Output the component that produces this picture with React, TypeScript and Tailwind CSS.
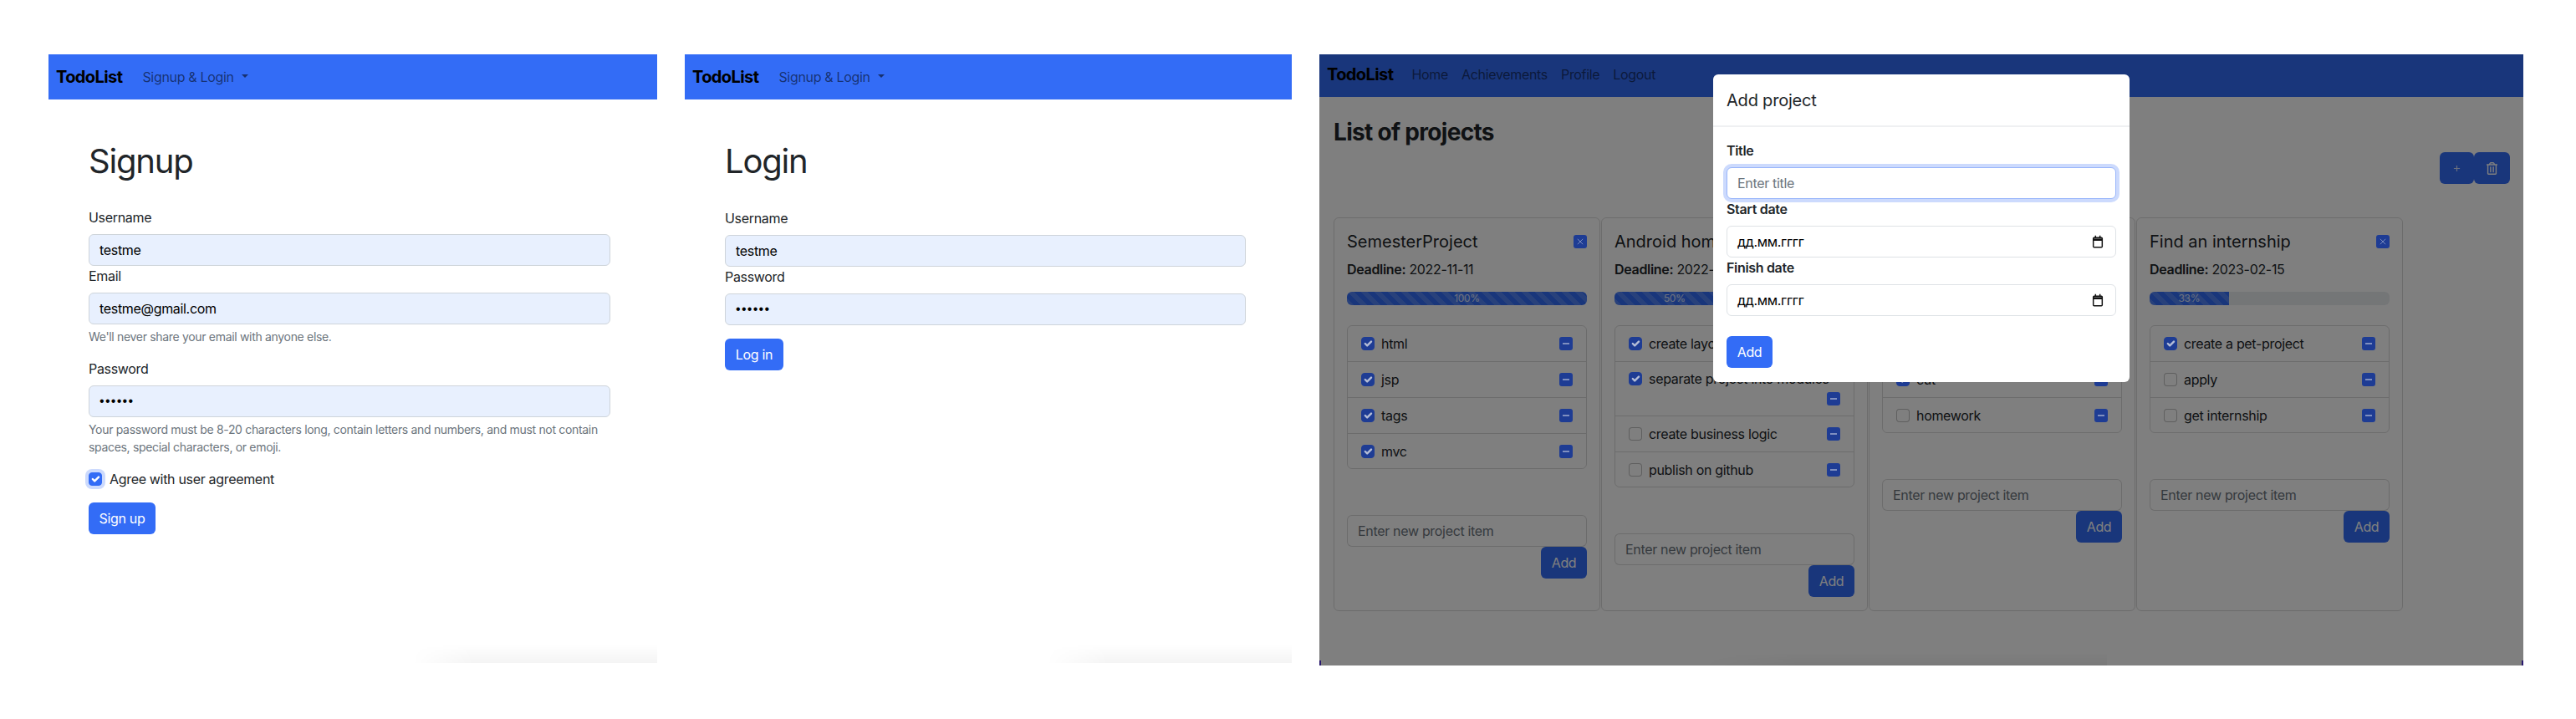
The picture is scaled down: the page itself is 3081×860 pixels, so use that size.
import React from "react";
import { FaRegTrashAlt } from "react-icons/fa";

const Check = ({ color = "#fff" }: { color?: string }) => (
  <svg viewBox="0 0 20 20" className="w-4 h-4 block" fill="none" stroke={color} strokeLinecap="round" strokeLinejoin="round" strokeWidth={3}>
    <path d="m6 10 3 3 6-6" />
  </svg>
);

function Box({ on, ring, dim }: { on?: boolean; ring?: boolean; dim?: boolean }) {
  const fill = dim ? "relative z-10 bg-[#1e3c94] border-[#1e3c94] " : "bg-[#336cf6] border-[#336cf6] ";
  return (
    <span
      className={
        "block w-4 h-4 shrink-0 rounded-[4px] border " +
        (on ? fill : "bg-white border-black/25 ") +
        (ring ? "shadow-[0_0_0_4px_rgba(51,108,246,0.25)]" : "")
      }
    >
      {on && (
        <span className="block -m-px">
          <Check color={dim ? "#b4bdd6" : "#fff"} />
        </span>
      )}
    </span>
  );
}

function Field({ label, value, type = "text", help }: { label: string; value: string; type?: string; help?: React.ReactNode }) {
  return (
    <div>
      <label className="block mb-2 leading-6 text-[#212529]">{label}</label>
      <input
        readOnly
        type={type}
        value={value}
        className={
          "block w-full h-[38px] px-3 rounded-md border border-[#ced4da] bg-[#e8f0fe] text-black outline-none " +
          (type === "password" ? "font-['Liberation_Sans',sans-serif] tracking-[0.08em]" : "")
        }
      />
      {help && <div className="mt-1 text-[14px] leading-[21px] text-[#6c757d]">{help}</div>}
    </div>
  );
}

function BlueButton({ children, className = "" }: { children: React.ReactNode; className?: string }) {
  return (
    <button className={"h-[38px] rounded-md bg-[#336cf6] text-white whitespace-nowrap " + className}>{children}</button>
  );
}

function SmallBar({ children }: { children: React.ReactNode }) {
  return (
    <button className="relative z-10 w-4 h-4 shrink-0 rounded-[3px] bg-[#1e3c94] flex items-center justify-center">{children}</button>
  );
}

const Minus = () => <span className="block w-2 h-[2px] bg-[#7f8fc0]" />;

function Brand() {
  return <span className="text-[20px] font-bold text-black leading-[30px] tracking-[-0.03em]">TodoList</span>;
}

function SignNav() {
  return (
    <nav className="h-[54px] bg-[#336cf6] flex items-center pl-[9px] border-b border-[#3a70f4]">
      <Brand />
      <span className="ml-[24px] text-black/55 flex items-center">
        Signup &amp; Login
        <span className="ml-[9px] mt-[-2px] border-x-[4.8px] border-t-[4.8px] border-x-transparent border-t-black/55" />
      </span>
    </nav>
  );
}

function Fade() {
  return (
    <div className="absolute right-0 bottom-0 w-[293px] h-[22px] bg-[linear-gradient(to_bottom,rgba(0,0,0,0),rgba(0,0,0,0.045))] [mask-image:linear-gradient(to_right,transparent,black_25%)]" />
  );
}

function SignupPanel() {
  return (
    <section className="relative w-[728px] h-[728px] bg-white">
      <SignNav />
      <div className="pl-12 w-[672px] pt-[50px]">
        <h1 className="text-[40px] leading-[48px] font-normal text-[#212529] mb-[31px] tracking-[-0.03em]">Signup</h1>
        <Field label="Username" value="testme" />
        <Field label="Email" value="testme@gmail.com" help="We'll never share your email with anyone else." />
        <div className="mt-4">
          <Field
            label="Password"
            type="password"
            value="qwerty"
            help="Your password must be 8-20 characters long, contain letters and numbers, and must not contain spaces, special characters, or emoji."
          />
        </div>
        <div className="mt-4 flex items-center gap-[9px] text-[#212529] leading-6">
          <Box on ring />
          Agree with user agreement
        </div>
        <BlueButton className="mt-4 block w-[80px]">Sign up</BlueButton>
      </div>
      <Fade />
    </section>
  );
}

function LoginPanel() {
  return (
    <section className="relative w-[726px] h-[728px] bg-white">
      <SignNav />
      <div className="pl-12 w-[671px] pt-[50px]">
        <h1 className="text-[40px] leading-[48px] font-normal text-[#212529] mb-[32px] tracking-[-0.03em]">Login</h1>
        <Field label="Username" value="testme" />
        <Field label="Password" type="password" value="qwerty" />
        <BlueButton className="mt-4 block w-[70px]">Log in</BlueButton>
      </div>
      <Fade />
    </section>
  );
}

type Item = { text: string; on?: boolean; wrap?: boolean };

function Row({ text, on, wrap }: Item) {
  if (wrap) {
    return (
      <li className="h-[65px] border-b border-black/15 px-4 pt-[12px]">
        <div className="flex items-center gap-2 h-4 whitespace-nowrap">
          <Box on={on} dim />
          <span>{text}</span>
        </div>
        <div className="flex justify-end mt-2">
          <SmallBar>
            <Minus />
          </SmallBar>
        </div>
      </li>
    );
  }
  return (
    <li className="h-[43px] last:h-[41px] pb-px last:pb-0 border-b last:border-b-0 border-black/15 px-4 flex items-center gap-2">
      <Box on={on} dim />
      <span className="flex-1 whitespace-nowrap">{text}</span>
      <SmallBar>
        <Minus />
      </SmallBar>
    </li>
  );
}

function Card({ title, deadline, pct, items }: { title: string; deadline: string; pct: number; items: Item[] }) {
  return (
    <article className="w-[319px] h-[471px] rounded-md border border-black/15 px-[15px] pt-[14px] text-[#212529]">
      <div className="flex items-center justify-between h-[28px]">
        <h3 className="text-[20px] leading-6 tracking-normal">{title}</h3>
        <SmallBar>
          <svg viewBox="0 0 10 10" className="w-2 h-2" stroke="#8f9dc8" strokeWidth={1}>
            <path d="M1 1l8 8M9 1l-8 8" />
          </svg>
        </SmallBar>
      </div>
      <p className="mt-[7px] leading-6">
        <b className="font-semibold">Deadline:</b> {deadline}
      </p>
      <div className="mt-[15px] h-4 rounded-md bg-[#e9ecef] overflow-hidden">
        <div
          className="h-full flex items-center justify-center text-[12px] text-white/80 bg-[#336cf6] bg-[linear-gradient(45deg,rgba(255,255,255,0.15)_25%,transparent_25%,transparent_50%,rgba(255,255,255,0.15)_50%,rgba(255,255,255,0.15)_75%,transparent_75%,transparent)] bg-[length:16px_16px]"
          style={{ width: `${pct}%` }}
        >
          {pct}%
        </div>
      </div>
      <ul className="mt-6 rounded-md border border-black/15">
        {items.map((it) => (
          <Row key={it.text} {...it} />
        ))}
      </ul>
      <input
        readOnly
        placeholder="Enter new project item"
        className="mt-[55px] block w-full h-[38px] px-3 rounded-md border border-black/15 bg-white outline-none placeholder:text-[#6c757d]"
      />
      <div className="flex justify-end">
        <BlueButton className="w-[55px]">Add</BlueButton>
      </div>
    </article>
  );
}

function DateField({ label }: { label: string }) {
  return (
    <div>
      <label className="block mb-2 leading-6 font-semibold text-[#212529]">{label}</label>
      <div className="h-[38px] px-3 rounded-md border border-[#dee2e6] flex items-center justify-between text-black text-[16px]">
        <span>дд.мм.гггг</span>
        <svg viewBox="0 0 24 24" className="w-[16px] h-[16px] mr-[1px]" fill="none" stroke="#111" strokeWidth={2.2}>
          <rect x="4" y="5" width="16" height="17" rx="1.5" />
          <path d="M3 8.5h18" strokeWidth={4} />
          <path d="M8 1v5M16 1v5" />
        </svg>
      </div>
    </div>
  );
}

function ProjectsPanel() {
  return (
    <section className="relative w-[1440px] h-[731px] bg-white overflow-hidden">
      <nav className="h-[51px] bg-[#336cf6] flex items-center pl-[9px] pb-[3px] gap-4">
        <Brand />
        <span className="text-black/55 ml-[6px]">Home</span>
        <span className="text-black/55">Achievements</span>
        <span className="text-black/55">Profile</span>
        <span className="text-black/55">Logout</span>
      </nav>
      <div className="pl-[17px] pr-4">
        <h2 className="mt-[25px] h-[34px] text-[28px] leading-[34px] font-bold text-[#212529] tracking-[-0.025em]">List of projects</h2>
        <div className="mt-[7px] flex justify-end">
          <button className="w-[41px] h-[38px] rounded-md bg-[#336cf6] flex items-center justify-center">
            <svg viewBox="0 0 10 10" className="w-[9px] h-[9px]" stroke="#ffffff" strokeOpacity={0.8} strokeWidth={1.3}>
              <path d="M5 1v8M1 5h8" />
            </svg>
          </button>
          <button className="w-[43px] h-[38px] rounded-md bg-[#336cf6] flex items-center justify-center">
            <FaRegTrashAlt className="text-white text-[15px]" />
          </button>
        </div>
        <div className="mt-[40px] flex gap-px">
          <Card
            title="SemesterProject"
            deadline="2022-11-11"
            pct={100}
            items={[
              { text: "html", on: true },
              { text: "jsp", on: true },
              { text: "tags", on: true },
              { text: "mvc", on: true },
            ]}
          />
          <Card
            title="Android homework"
            deadline="2022-12-20"
            pct={50}
            items={[
              { text: "create layout", on: true },
              { text: "separate project into modules", on: true, wrap: true },
              { text: "create business logic" },
              { text: "publish on github" },
            ]}
          />
          <Card
            title="University"
            deadline="2022-12-30"
            pct={67}
            items={[
              { text: "lectures", on: true },
              { text: "cut", on: true },
              { text: "homework" },
            ]}
          />
          <Card
            title="Find an internship"
            deadline="2023-02-15"
            pct={33}
            items={[
              { text: "create a pet-project", on: true },
              { text: "apply" },
              { text: "get internship" },
            ]}
          />
        </div>
      </div>
      <div className="absolute left-[452px] bottom-0 w-[490px] h-4 bg-[linear-gradient(to_bottom,rgba(0,0,0,0),rgba(0,0,0,0.05))] [mask-image:linear-gradient(to_right,transparent,black_25%)]" />
      <div className="absolute inset-0 bg-black/50" />
      <div className="absolute left-0 bottom-0 w-[2px] h-[6px] bg-[#2a1a6e]" />
      <div className="absolute right-0 bottom-0 w-[2px] h-[6px] bg-[#2a1a6e]" />
      <div className="absolute z-20 left-[471px] top-[24px] w-[498px] h-[368px] rounded-md bg-white">
        <div className="h-[63px] px-4 flex items-center border-b-2 border-[#eff0f2]">
          <h4 className="text-[20px] text-[#212529] tracking-[-0.01em]">Add project</h4>
        </div>
        <div className="px-4 pt-[16px]">
          <label className="block mb-2 leading-6 font-semibold text-[#212529]">Title</label>
          <input
            readOnly
            placeholder="Enter title"
            className="block w-full h-[38px] px-3 rounded-md border border-[#99b6fb] bg-white outline-none placeholder:text-[#6c757d] shadow-[0_0_0_4px_rgba(51,108,246,0.25)]"
          />
          <DateField label="Start date" />
          <DateField label="Finish date" />
          <BlueButton className="mt-6 w-[55px] block">Add</BlueButton>
        </div>
      </div>
    </section>
  );
}

export default function App() {
  return (
    <div className="w-[3081px] h-[860px] bg-white flex items-start gap-[33px] pl-[58px] pt-[65px] overflow-hidden font-['Inter',sans-serif] text-[16px] tracking-[-0.02em]">
      <SignupPanel />
      <LoginPanel />
      <ProjectsPanel />
    </div>
  );
}
